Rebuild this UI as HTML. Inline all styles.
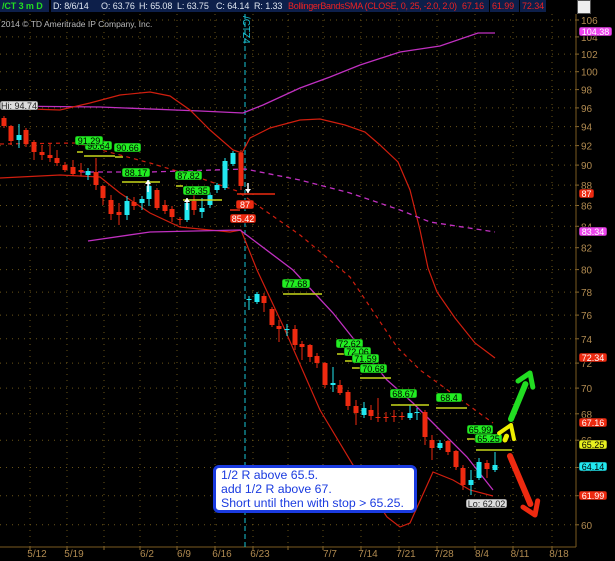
<!DOCTYPE html>
<html><head><meta charset="utf-8">
<style>
html,body{margin:0;padding:0;background:#000;width:615px;height:561px;overflow:hidden;font-family:"Liberation Sans",sans-serif}
#hdr{position:absolute;left:0;top:0;width:615px;height:13px;background:#000}
.c{position:absolute;top:0;height:12px;background:#0d1f4a;color:#dfe6f0;font-size:9px;letter-spacing:-0.1px;line-height:12px;padding-left:2px;white-space:nowrap;overflow:hidden}
svg{position:absolute;left:0;top:0}
.note{position:absolute;left:213px;top:465px;width:193px;height:42px;background:#fff;border:3px solid #1a3be0;border-radius:6px;color:#1a3be0;font-size:12.3px;line-height:14px;padding:0 0 0 5px;box-sizing:content-box}
</style></head><body>
<svg id="s" width="615" height="561" xmlns="http://www.w3.org/2000/svg"></svg>
<div id="hdr">
<div class="c" style="left:0;width:47px;color:#22dd22;font-weight:bold">/CT 3 m D</div>
<div class="c" style="left:51px;width:46px">D: 8/6/14</div>
<div class="c" style="left:99px;width:36px">O: 63.76</div>
<div class="c" style="left:137px;width:36px">H: 65.08</div>
<div class="c" style="left:175px;width:37px">L: 63.75</div>
<div class="c" style="left:214px;width:36px">C: 64.14</div>
<div class="c" style="left:252px;width:32px">R: 1.33</div>
<div class="c" style="left:286px;width:172px;color:#ee2222;letter-spacing:-0.3px">BollingerBandsSMA (CLOSE, 0, 25, -2.0, 2.0)</div>
<div class="c" style="left:460px;width:27px;color:#ee2222">67.16</div>
<div class="c" style="left:490px;width:27px;color:#ee2222">61.99</div>
<div class="c" style="left:520px;width:24px;color:#ee2222">72.34</div>
<div style="position:absolute;left:577px;top:0;width:12px;height:12px;background:#eee;border:1px solid #555"></div>
</div>
<div class="note">1/2 R above 65.5.<br>add 1/2 R above 67.<br>Short until then with stop &gt; 65.25.</div>
<script>
var s=document.getElementById('s'),h='';
function Y(p){return 20+(Math.log(106)-Math.log(p))*887;}
for(var p=60;p<=106;p+=2){var y=Y(p).toFixed(1);
h+='<line x1="0" y1="'+y+'" x2="575" y2="'+y+'" stroke="#6a5418" stroke-width="1" stroke-dasharray="1,5"/>';
h+='<line x1="575" y1="'+y+'" x2="579" y2="'+y+'" stroke="#8a6a30"/>';
h+='<text x="581" y="'+(+y+4)+'" fill="#b08a50" font-size="10">'+p+'</text>';}
var ticks=[[30,'5/12'],[67,'5/19'],[104,''],[140,'6/2'],[177,'6/9'],[215,'6/16'],[253,'6/23'],[288,''],[323,'7/7'],[361,'7/14'],[399,'7/21'],[437,'7/28'],[475,'8/4'],[513,'8/11'],[552,'8/18']];
ticks.forEach(function(t){h+='<line x1="'+t[0]+'" y1="14" x2="'+t[0]+'" y2="546" stroke="#6a5418" stroke-dasharray="1,5"/>';
h+='<line x1="'+t[0]+'" y1="546" x2="'+t[0]+'" y2="550" stroke="#8a6a30"/>';
if(t[1])h+='<text x="'+(t[0]+7)+'" y="557" fill="#b08a50" font-size="10" text-anchor="middle">'+t[1]+'</text>';});
h+='<line x1="576" y1="14" x2="576" y2="547" stroke="#7a5a20"/><line x1="0" y1="547" x2="576" y2="547" stroke="#7a5a20"/>';
h+='<line x1="245" y1="14" x2="245" y2="547" stroke="#19c6d6" stroke-dasharray="5,3"/>';
h+='<text transform="translate(243,16) rotate(90)" fill="#19c6d6" font-size="10">/CTZ4</text>';
h+='<text x="1" y="27" fill="#bbb" font-size="8.5">2014 © TD Ameritrade IP Company, Inc.</text>';
function pl(pts,col,w,da){h+='<polyline fill="none" stroke="'+col+'" stroke-width="'+(w||1)+'" '+(da?'stroke-dasharray="'+da+'"':'')+' points="'+pts+'"/>';}
pl('0,106 100,107 200,111 243,113 263,105 300,88 330,77 360,65 400,52 440,46 478,33 495,33','#c030c0',1.3);
pl('0,108 60,110 90,103 120,95 150,92 170,96 190,110 210,130 233,150 242,153 250,138 270,128 300,120 320,119 345,125 365,132 380,145 398,162 410,190 420,230 428,268 437,292 455,318 475,343 495,358','#d01e0e',1.2);
pl('0,144 75,143 150,163 200,178 237,191 300,235 350,277 397,347 420,370 493,423','#d01e0e',1.2,'4,4');
pl('80,172 150,172 245,169 300,180 350,193 400,210 430,222 495,232','#c030c0',1.3,'5,4');
pl('0,178 60,175 100,177 120,193 150,213 180,227 230,232 241,230 257,270 285,330 320,410 353,465 387,517 400,527 410,523 433,472 453,480 470,490 493,496','#d01e0e',1.2);
pl('88,241 150,232 240,230 293,270 333,313 360,347 387,380 413,403 433,423 467,457 493,490','#c030c0',1.3);
var C=[[4,118,126,116,128,'r'],[11,126,141,125,145,'r'],[19,135,140,124,148,'c'],[26,130,144,128,147,'r'],[34,142,152,140,160,'r'],[42,152,155,145,160,'r'],[50,155,158,144,162,'r'],[57,158,163,150,166,'r'],[65,165,170,162,172,'r'],[73,167,174,160,176,'r'],[81,170,172,163,176,'r'],[88,171,175,168,180,'c'],[96,172,185,158,190,'r'],[103,186,198,185,205,'r'],[111,200,214,195,220,'r'],[119,212,215,203,225,'r'],[127,201,215,196,220,'c'],[134,202,206,197,210,'r'],[142,199,203,196,210,'c'],[149,186,199,180,206,'c'],[157,190,208,188,210,'r'],[165,205,211,200,214,'r'],[172,209,217,206,222,'r'],[180,219,220,217,225,'r'],[187,203,220,200,222,'c'],[194,201,210,195,215,'r'],[202,208,212,198,218,'c'],[210,195,205,192,208,'c'],[217,185,190,183,193,'c'],[225,161,188,158,190,'c'],[233,153,164,151,166,'c'],[241,153,186,150,190,'r'],
[249,299,300,296,310,'c'],[257,294,302,292,304,'c'],[264,296,303,293,312,'r'],[272,309,325,307,327,'r'],[279,326,329,320,342,'r'],[287,329,330,324,336,'c'],[295,329,345,325,350,'r'],[302,344,347,341,360,'r'],[310,345,357,344,362,'r'],[317,356,363,353,368,'r'],[325,363,385,362,388,'r'],[333,383,385,367,392,'c'],[340,385,393,380,395,'r'],[348,392,406,390,410,'r'],[356,406,413,400,425,'r'],[364,408,415,402,418,'c'],[371,410,416,405,420,'r'],[378,417,418,398,422,'r'],[386,417,418,412,422,'r'],[394,416,417,410,422,'r'],[402,416,417,412,420,'r'],[410,413,418,405,420,'c'],[417,412,413,408,420,'c'],[425,412,437,410,445,'r'],[432,440,448,435,460,'r'],[440,443,448,440,450,'c'],[448,441,452,440,455,'r'],[456,451,467,450,470,'r'],[463,468,485,465,490,'r'],[471,480,485,470,495,'c'],[479,462,478,458,480,'c'],[487,463,469,460,478,'r'],[495,465,470,452,472,'c']];
C.forEach(function(c){var col=c[5]=='r'?'#ee2a10':'#22e8f0';
h+='<line x1="'+c[0]+'" y1="'+c[3]+'" x2="'+c[0]+'" y2="'+c[4]+'" stroke="'+col+'"/>';
h+='<rect x="'+(c[0]-2.5)+'" y="'+c[1]+'" width="5" height="'+Math.max(1,c[2]-c[1])+'" fill="'+col+'"/>';});
[[77,83,152],[84,115,156],[115,123,157],[122,160,182],[176,183,186],[183,222,200],[283,322,294],[337,345,354],[345,352,361],[352,360,368],[360,391,378],[391,429,405],[436,467,408],[467,475,439],[476,512,450]].forEach(function(l){h+='<line x1="'+l[0]+'" y1="'+l[2]+'" x2="'+l[1]+'" y2="'+l[2]+'" stroke="#c8d81a" stroke-width="1.5"/>';});
h+='<line x1="237" y1="194" x2="275" y2="194" stroke="#ee2a10" stroke-width="1.5"/><line x1="230" y1="210" x2="240" y2="210" stroke="#ee2a10" stroke-width="1.5"/>';
function tag(x,y,w,t,bg,fg){h+='<rect x="'+x+'" y="'+y+'" width="'+w+'" height="9" rx="2" fill="'+bg+'" stroke="#000" stroke-width=".5"/><text x="'+(x+w/2)+'" y="'+(y+8)+'" fill="'+fg+'" font-size="9" text-anchor="middle">'+t+'</text>';}
var G='#22ee22';
tag(85,141,27,'90.64',G,'#000');tag(75,136,28,'91.29',G,'#000');tag(114,143,27,'90.66',G,'#000');tag(122,168,28,'88.17',G,'#000');tag(175,171,27,'87.82',G,'#000');tag(183,186,27,'86.35',G,'#000');
tag(282,279,28,'77.68',G,'#000');tag(336,339,27,'72.62',G,'#000');tag(344,347,27,'72.06',G,'#000');tag(352,354,27,'71.59',G,'#000');tag(360,364,27,'70.68',G,'#000');tag(390,389,27,'68.67',G,'#000');tag(436,393,26,'68.4',G,'#000');tag(467,425,26,'65.99',G,'#000');tag(475,434,27,'65.25',G,'#000');
tag(236,200,18,'87','#ee2a10','#fff');tag(230,214,26,'85.42','#ee2a10','#fff');
tag(0,101,38,'Hi: 94.74','#ddd','#222');tag(466,499,41,'Lo: 62.02','#ddd','#222');
tag(579,27,33,'104.38','#ee44ee','#fff');tag(579,189,15,'87','#ee2a10','#fff');tag(579,227,28,'83.34','#ee44ee','#fff');tag(579,353,28,'72.34','#ee2a10','#fff');tag(579,418,28,'67.16','#ee2a10','#fff');tag(579,440,28,'65.25','#e8f020','#000');tag(579,462,28,'64.14','#22e8f0','#000');tag(579,491,28,'61.99','#ee2a10','#fff');
function wa(x,y1,y2,up){h+='<line x1="'+x+'" y1="'+y1+'" x2="'+x+'" y2="'+y2+'" stroke="#fff" stroke-width="1.5"/>';var t=up?y1:y2,d=up?4:-4;h+='<polygon fill="#fff" points="'+(x-3)+','+(t+d)+' '+x+','+t+' '+(x+3)+','+(t+d)+'"/>';}
wa(148,180,192,true);wa(187,198,210,true);wa(248,183,193,false);
function arr(x1,y1,x2,y2,col,w){var a=Math.atan2(y2-y1,x2-x1),L=12,hw=8;var bx=x2-L*Math.cos(a),by=y2-L*Math.sin(a);
h+='<line x1="'+x1+'" y1="'+y1+'" x2="'+bx+'" y2="'+by+'" stroke="'+col+'" stroke-width="'+w+'" stroke-linecap="round"/>';
var px=-Math.sin(a),py=Math.cos(a);h+='<polyline fill="none" stroke="'+col+'" stroke-width="'+(w-1)+'" stroke-linejoin="round" stroke-linecap="round" points="'+(bx+px*hw)+','+(by+py*hw)+' '+x2+','+y2+' '+(bx-px*hw)+','+(by-py*hw)+'"/>';}
arr(511,419,530,373,'#22dd22',6);arr(505,440,511,425,'#eeee00',5);arr(510,456,535,515,'#ee2a10',6);
s.innerHTML=h;
</script>
</body></html>
